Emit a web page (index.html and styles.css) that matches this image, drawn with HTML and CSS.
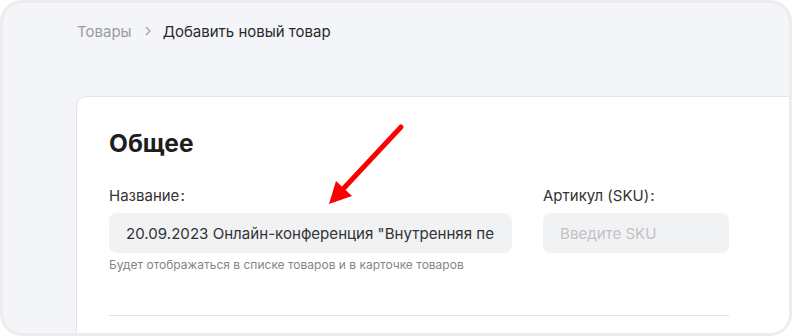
FILE: index.html
```html
<!DOCTYPE html>
<html lang="ru">
<head>
    <meta charset="UTF-8">
    <meta name="viewport" content="width=device-width, initial-scale=1.0">
    <title>Добавить новый товар</title>
    <link rel="stylesheet" href="styles.css">
</head>
<body>

    <div class="window">
        <!-- Breadcrumbs -->
        <div class="breadcrumbs">
            <span class="crumb">Товары</span>
            <svg class="crumb-sep" width="10" height="10" viewBox="0 0 10 10">
                <path d="M3 1 L7 5 L3 9" fill="none" stroke="#a3a3a3" stroke-width="1.3"/>
            </svg>
            <span class="crumb current">Добавить новый товар</span>
        </div>

        <!-- Card -->
        <div class="card">
            <h2 class="card-title">Общее</h2>

            <div class="form-row">
                <div class="field">
                    <label class="field-label">Название<span class="colon">:</span></label>
                    <input class="input-box" type="text" value='20.09.2023 Онлайн-конференция "Внутренняя переписка"'>
                    <div class="hint">Будет отображаться в списке товаров и в карточке товаров</div>
                </div>
                <div class="field">
                    <label class="field-label">Артикул (SKU)<span class="colon">:</span></label>
                    <input class="input-box" type="text" placeholder="Введите SKU">
                </div>
            </div>

            <div class="divider"></div>

            <svg class="arrow" width="82" height="86" viewBox="0 0 82 86">
                <line x1="76" y1="5" x2="19" y2="66" stroke="#ff0000" stroke-width="5" stroke-linecap="round"/>
                <polygon points="4,82 11,59 27,74" fill="#ff0000"/>
            </svg>
        </div>
    </div>

</body>
</html>
```

FILE: styles.css
```css
* {
    margin: 0;
    padding: 0;
    box-sizing: border-box;
    font-family: Inter, "Noto Sans", sans-serif;
}
body {
    background: #ffffff;
    width: 792px;
    height: 336px;
    overflow: hidden;
}
.window {
    width: 792px;
    height: 336px;
    border: 3px solid #ececec;
    border-radius: 22px;
    background: #f4f5f9;
    overflow: hidden;
    padding: 18px 0 0 73px;
}
.breadcrumbs {
    display: flex;
    align-items: center;
    height: 20px;
    font-size: 15px;
    padding-left: 1px;
}
.crumb { color: #9c9c9c; }
.crumb.current { color: #2a2a2a; }
.crumb-sep { margin: 0 10px 0 11px; }
.card {
    position: relative;
    margin-top: 55px;
    width: 740px;
    height: 300px;
    background: #ffffff;
    border: 1px solid #e4e5ea;
    border-radius: 10px;
    padding: 30px 32px 0 32px;
}
.card-title {
    font-size: 24.5px;
    line-height: 32px;
    font-weight: 700;
    color: #1e1e1e;
}
.form-row {
    display: grid;
    grid-template-columns: 403px 186px;
    gap: 31px;
    margin-top: 27px;
}
.field-label {
    display: block;
    font-size: 15px;
    line-height: 20px;
    color: #333333;
    margin-bottom: 7px;
}
.colon { margin-left: 1px; }
.input-box {
    display: block;
    width: 100%;
    height: 40px;
    border: none;
    outline: none;
    border-radius: 8px;
    background: #f1f2f4;
    padding: 0 18px 0 17px;
    font-size: 15.1px;
    color: #333333;
}
.input-box::placeholder { color: #c2c2c4; }
.hint {
    margin-top: 5px;
    font-size: 12px;
    line-height: 14px;
    color: #858585;
}
.divider {
    width: 620px;
    height: 1px;
    background: #e2e2e2;
    margin-top: 43px;
}
.arrow {
    position: absolute;
    left: 248px;
    top: 25px;
}
```
